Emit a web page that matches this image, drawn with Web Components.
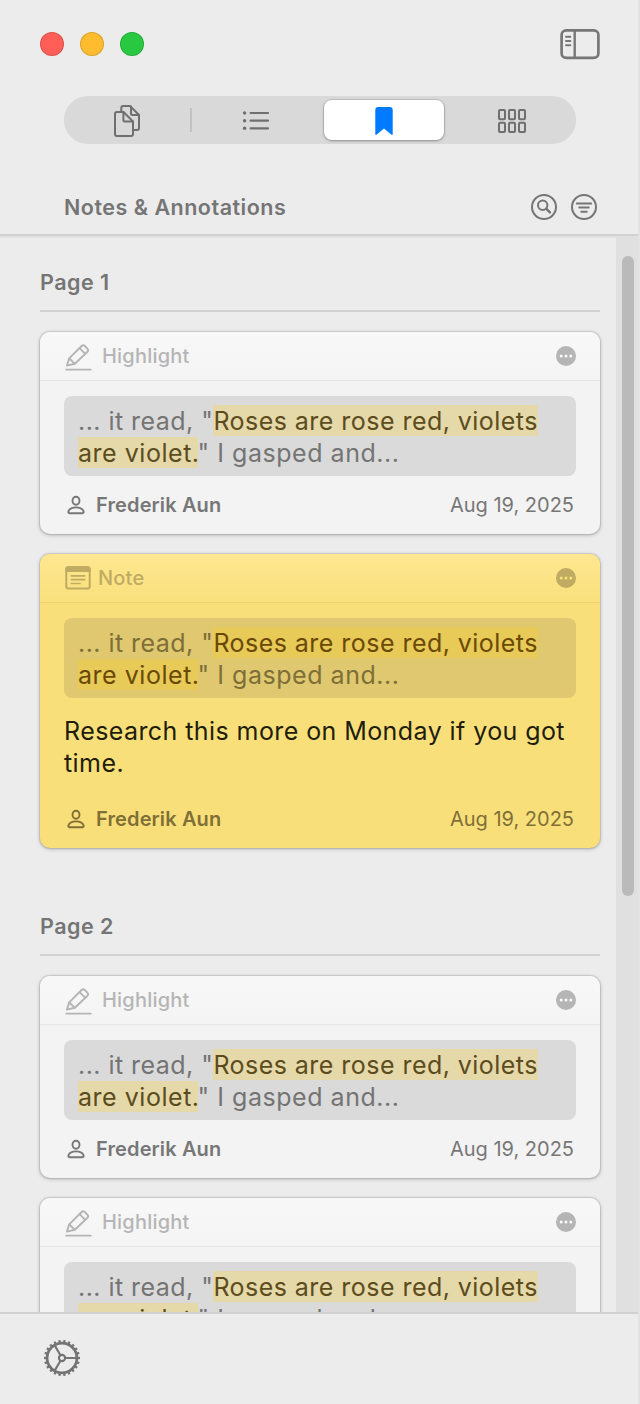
<!DOCTYPE html>
<html lang="en">
<head>
<meta charset="utf-8">
<title>Notes &amp; Annotations</title>
<style>
html, body { margin: 0; height: 100%; }
body { background: #ececec; font-family: Inter, "Liberation Sans", sans-serif; color: #757575; overflow: hidden; }
</style>
</head>
<body>
<app-sidebar>
  <annotation-group label="Page 1">
    <annotation-card kind="Highlight"></annotation-card>
    <annotation-card kind="Note">Research this more on Monday if you got time.</annotation-card>
  </annotation-group>
  <annotation-group label="Page 2">
    <annotation-card kind="Highlight"></annotation-card>
    <annotation-card kind="Highlight"></annotation-card>
  </annotation-group>
</app-sidebar>
<script>
const teeth = Array.from({ length: 22 }, (_, i) =>
  `<path d="M34.5 20H38" transform="rotate(${i * 360 / 22} 20 20)"/>`).join('');

const ICONS = {
  sidebar: [40, 32, `<g stroke-width="2.7"><rect x="1.6" y="2.3" width="36.8" height="27.6" rx="4.6"/><path d="M14.7 2.5V29.5" stroke-width="2.4"/></g><path stroke-width="1.9" d="M6 8.7H10.4M6 13H10.4M6 17.2H10.4"/>`],
  pages: [28, 34, `<g stroke-width="2"><path d="M4 8H10.5L20 17.500V30A2 2 0 0 1 18 32H4A2 2 0 0 1 2 30V10A2 2 0 0 1 4 8Z"/><path d="M10.400 8.200V16A1.500 1.500 0 0 0 11.900 17.500H19.800"/><path d="M8.300 7.500V4A2 2 0 0 1 10.300 2H17L26 11V24A2 2 0 0 1 24 26H21"/><path d="M18 2.500V9.500A1.500 1.500 0 0 0 19.500 11H25.800"/></g>`],
  list: [28, 20, `<g fill="currentColor" stroke="none"><circle cx="2.600" cy="3" r="1.700"/><circle cx="2.600" cy="10.700" r="1.700"/><circle cx="2.600" cy="18.300" r="1.700"/></g><path stroke-width="2.200" d="M8.600 3H26M8.600 10.700H26M8.600 18.300H26"/>`],
  bookmark: [20, 30, `<path fill="currentColor" stroke="none" d="M1.300 4Q1.300 1 4.300 1H15.700Q18.700 1 18.700 4V28Q18.700 29.600 17.200 28.500L10 22.500L2.800 28.500Q1.300 29.600 1.300 28Z"/>`],
  grid: [28, 24, `<g stroke-width="2"><rect x="1" y="1" width="6" height="9.200" rx="1"/><rect x="11" y="1" width="6" height="9.200" rx="1"/><rect x="21" y="1" width="6" height="9.200" rx="1"/><rect x="1" y="13.800" width="6" height="9.200" rx="1"/><rect x="11" y="13.800" width="6" height="9.200" rx="1"/><rect x="21" y="13.800" width="6" height="9.200" rx="1"/></g>`],
  search: [28, 28, `<g stroke-width="2"><circle cx="14" cy="14" r="12"/><circle cx="12.700" cy="12.200" r="4.700"/><path d="M16.200 15.700L19.900 19.300" stroke-width="2.500"/></g>`],
  filter: [28, 28, `<g stroke-width="2"><circle cx="14" cy="14" r="12"/><path d="M6.800 10.400H21.200M9.300 14.600H18.700M11.300 18.800H16.700"/></g>`],
  pencil: [28, 28, `<g stroke-width="1.900"><path d="M2.900 22.600L5.200 15.400L17.600 3Q19.200 1.500 20.800 3L23.400 5.600Q24.900 7.200 23.400 8.800L10.900 20.800Z"/><path d="M15.600 5.100L21.300 10.800M5.400 15.500L10.600 20.700"/><path d="M2.200 26.600H26.800"/></g>`],
  note: [28, 26, `<rect x="2.300" y="2.200" width="23.400" height="21.300" rx="2" stroke-width="2"/><path fill="currentColor" stroke="none" d="M1.400 7V4Q1.400 1.200 4 1.200H24Q26.600 1.200 26.600 4V7Z"/><path stroke-width="1.700" d="M7.300 10.800H20.700M7.300 14.700H20.700M7.300 18.500H16"/>`],
  more: [20, 20, `<circle cx="10" cy="10" r="10" fill="currentColor" stroke="none"/><g fill="var(--dot)" stroke="none"><circle cx="5.200" cy="10" r="1.500"/><circle cx="10" cy="10" r="1.500"/><circle cx="14.800" cy="10" r="1.500"/></g>`],
  person: [20, 20, `<g stroke-width="1.900"><ellipse cx="10" cy="5.800" rx="3.500" ry="4"/><path d="M3.700 18.200Q2.200 18.200 2.400 16.600C3.200 13.700 6.200 12.400 10 12.400S16.800 13.700 17.600 16.600Q17.800 18.200 16.300 18.200Z"/></g>`],
  gear: [40, 40, `<circle cx="20" cy="20" r="14.900" stroke-width="2.700"/><circle cx="20" cy="20" r="3.100" stroke-width="2.100"/><g stroke-width="2.100"><path d="M23.400 20H34"/><path d="M23.400 20H34" transform="rotate(120 20 20)"/><path d="M23.400 20H34" transform="rotate(240 20 20)"/></g><g stroke-width="2.300" stroke-linecap="butt">${teeth}</g>`]
};

class UiIcon extends HTMLElement {
  connectedCallback() {
    const [w, h, body] = ICONS[this.getAttribute('name')];
    this.attachShadow({ mode: 'open' }).innerHTML = `
      <style>:host{display:block;flex:none;width:${w}px;height:${h}px} svg{display:block}</style>
      <svg width="${w}" height="${h}" viewBox="0 0 ${w} ${h}" fill="none" stroke="currentColor" stroke-linecap="round" stroke-linejoin="round">${body}</svg>`;
  }
}

class TrafficLights extends HTMLElement {
  connectedCallback() {
    this.attachShadow({ mode: 'open' }).innerHTML = `
      <style>
        :host{display:flex;gap:16px}
        i{width:24px;height:24px;border-radius:50%;box-shadow:inset 0 0 0 1px rgba(0,0,0,.14)}
      </style>
      <i style="background:#ff5f57"></i><i style="background:#febc2e"></i><i style="background:#28c840"></i>`;
  }
}

class SegmentedTabs extends HTMLElement {
  connectedCallback() {
    this.attachShadow({ mode: 'open' }).innerHTML = `
      <style>
        :host{display:grid;grid-template-columns:repeat(4,128px);height:48px;border-radius:24px;background:#d9d9d9;color:#6f6f6f}
        div{display:flex;align-items:center;justify-content:center}
        .first{background:linear-gradient(#c1c1c1,#c1c1c1) right 0 center/2px 24px no-repeat}
        .first ui-icon{margin:2px 2px 0 0}
        .on{background:#fff;color:#007aff;margin:4px;border-radius:8px;box-shadow:0 0 1px 1px rgba(0,0,0,.1),0 1px 3px rgba(0,0,0,.28)}
        .on ui-icon,.last ui-icon{margin-top:2px}
      </style>
      <div class="first"><ui-icon name="pages"></ui-icon></div>
      <div><ui-icon name="list"></ui-icon></div>
      <div class="on"><ui-icon name="bookmark"></ui-icon></div>
      <div class="last"><ui-icon name="grid"></ui-icon></div>`;
  }
}

class AnnotationGroup extends HTMLElement {
  connectedCallback() {
    this.attachShadow({ mode: 'open' }).innerHTML = `
      <style>
        :host{display:flex;flex-direction:column;gap:20px;margin-bottom:50px}
        h2{margin:0;height:39px;padding-top:17px;font-size:21.5px;line-height:22px;font-weight:600;letter-spacing:.5px;border-bottom:2px solid #d2d2d2}
      </style>
      <h2>${this.getAttribute('label')}</h2><slot></slot>`;
  }
}

class AnnotationCard extends HTMLElement {
  connectedCallback() {
    const kind = this.getAttribute('kind');
    const isNote = kind === 'Note';
    this.attachShadow({ mode: 'open' }).innerHTML = `
      <style>
        :host{display:block;height:202px;border-radius:10px;overflow:hidden;background:#f3f3f3;
          box-shadow:0 0 1px 1px rgba(0,0,0,.11),0 1px 4px rgba(0,0,0,.24);
          --top:linear-gradient(#f8f8f8,#f4f4f4);--line:#e5e5e5;--dim:#b5b5b5;--dot:#fafafa;--box:#dadada;--quote:#747474;--mark:#e5d8a9;--marked:#5c4c1d;--meta:#777}
        :host([kind=Note]){height:294px;background:#f8df7a;
          --top:linear-gradient(#fee791,#f9e07c);--line:#edd473;--dim:#bfab61;--dot:#f9e180;--box:#dfc86f;--quote:#7d6f37;--mark:#e7ca57;--marked:#6a4907;--meta:#806f36}
        header{box-sizing:border-box;height:49px;border-bottom:1px solid var(--line);background:var(--top);
          display:flex;align-items:center;padding:0 24px;color:var(--dim)}
        .kind{flex:1;font-size:20px;font-weight:500;letter-spacing:.2px;margin-left:10px}
        .note .kind{margin-left:6px}
        .pencil{margin-top:2px}
        .body{padding:15px 24px 0}
        .quote{box-sizing:border-box;height:80px;padding:9px 14px 7px;border-radius:8px;background:var(--box);color:var(--quote);font-size:25px;line-height:32px;letter-spacing:.46px;white-space:nowrap}
        .quote div{height:32px}
        .quote div + div{letter-spacing:.53px}
        mark{background:var(--mark);color:var(--marked);padding:1px 0 0}
        .text{color:#211d0d;font-size:25px;line-height:32px;letter-spacing:.42px;padding-top:17px;height:75px}
        footer{display:flex;align-items:center;height:24px;padding:17px 2px 0;color:var(--meta);font-size:20px}
        .who{flex:1;font-weight:600;letter-spacing:.13px;margin-left:10px}
        .when{letter-spacing:0}
      </style>
      <header class="${isNote ? 'note' : ''}">
        <ui-icon class="${isNote ? '' : 'pencil'}" name="${isNote ? 'note' : 'pencil'}"></ui-icon>
        <span class="kind">${kind}</span>
        <ui-icon name="more"></ui-icon>
      </header>
      <div class="body">
        <div class="quote"><div>... it read, "<mark>Roses are rose red, violets</mark></div><div><mark>are violet.</mark>" I gasped and...</div></div>
        ${isNote ? '<div class="text"><slot></slot></div>' : ''}
        <footer><ui-icon name="person"></ui-icon><span class="who">Frederik Aun</span><span class="when">Aug 19, 2025</span></footer>
      </div>`;
  }
}

class AppSidebar extends HTMLElement {
  connectedCallback() {
    this.attachShadow({ mode: 'open' }).innerHTML = `
      <style>
        :host{display:grid;grid-template-rows:236px 1076px 92px;width:638px;height:1404px;background:#ececec;border-right:2px solid #e3e3e3}
        .top{box-sizing:border-box;border-bottom:2px solid #d1d1d1;display:flex;flex-direction:column}
        .bar{height:96px;box-sizing:border-box;padding:28px 38px 0 40px;display:flex;justify-content:space-between;color:#777}
        traffic-lights{margin-top:4px}
        segmented-tabs{margin:0 auto 0 64px}
        .title{display:flex;align-items:center;gap:12px;padding:48px 40px 0 64px;height:30px}
        .title b{flex:1;font-size:21.5px;line-height:26px;margin-bottom:1px;font-weight:600;letter-spacing:.5px}
        .scroll{display:grid;grid-template-columns:616px 22px;overflow:hidden;background:linear-gradient(#e2e2e2,#e2e2e2) 0 0/100% 2px no-repeat}
        .list{padding:18px 16px 0 40px;overflow:hidden;min-height:0;height:1058px}
        .track{background:#e0e0e0;padding:20px 4px 0 6px}
        .thumb{height:640px;border-radius:6px;background:#bababa}
        .foot{border-top:2px solid #d1d1d1;padding:24px 0 0 42px;color:#747474}
      </style>
      <section class="top">
        <div class="bar"><traffic-lights></traffic-lights><ui-icon name="sidebar"></ui-icon></div>
        <segmented-tabs></segmented-tabs>
        <div class="title"><b>Notes &amp; Annotations</b><ui-icon name="search"></ui-icon><ui-icon name="filter"></ui-icon></div>
      </section>
      <section class="scroll">
        <div class="list"><slot></slot></div>
        <div class="track"><div class="thumb"></div></div>
      </section>
      <section class="foot"><ui-icon name="gear"></ui-icon></section>`;
  }
}

customElements.define('ui-icon', UiIcon);
customElements.define('traffic-lights', TrafficLights);
customElements.define('segmented-tabs', SegmentedTabs);
customElements.define('annotation-card', AnnotationCard);
customElements.define('annotation-group', AnnotationGroup);
customElements.define('app-sidebar', AppSidebar);
</script>
</body>
</html>
